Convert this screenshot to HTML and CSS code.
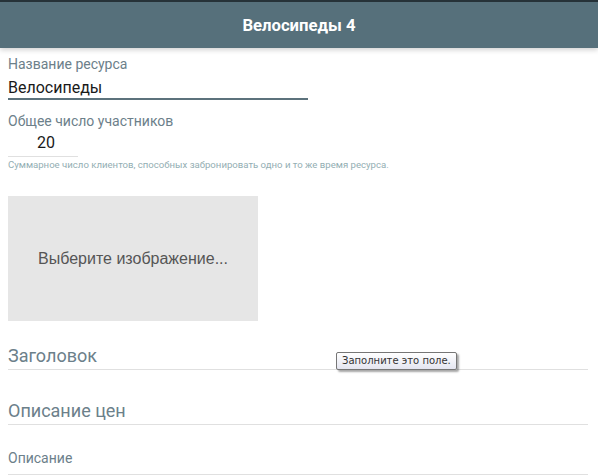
FILE: index.html
```html
<!DOCTYPE html>
<html lang="ru">
<head>
  <meta charset="UTF-8" />
  <meta name="viewport" content="width=device-width, initial-scale=1.0"/>
  <title>Велосипеды 4</title>
  <link rel="stylesheet" href="styles.css">
</head>
<body>
  <header class="toolbar">
    <h1>Велосипеды 4</h1>
  </header>

  <form class="form">
    <div class="field">
      <label for="name">Название ресурса</label>
      <input type="text" id="name" class="input active" value="Велосипеды">
    </div>

    <div class="field">
      <label for="capacity">Общее число участников</label>
      <input type="number" id="capacity" class="input short" value="20">
      <p class="hint">Суммарное число клиентов, способных забронировать одно и то же время ресурса.</p>
    </div>

    <div class="picker">Выберите изображение...</div>

    <div class="field wide title-field">
      <input type="text" class="input big" placeholder="Заголовок" required>
      <div class="tooltip">Заполните это поле.</div>
    </div>

    <div class="field wide">
      <input type="text" class="input big" placeholder="Описание цен">
    </div>

    <div class="field wide last">
      <input type="text" class="input small" placeholder="Описание">
    </div>
  </form>
</body>
</html>
```

FILE: styles.css
```css
* { box-sizing: border-box; }

body {
  margin: 0;
  font-family: Roboto, 'Noto Sans', sans-serif;
  background: #fff;
  color: #000;
  overflow: hidden;
}

.toolbar {
  height: 48px;
  background: #56707b;
  border-top: 2px solid #263238;
  display: flex;
  align-items: center;
  justify-content: center;
  box-shadow: 0 2px 5px rgba(0, 0, 0, 0.18);
}

.toolbar h1 {
  margin: 0;
  font-size: 16.7px;
  font-weight: 700;
  color: #fff;
}

.form {
  padding: 8px 10px 0 8px;
}

.field {
  position: relative;
  display: flex;
  flex-direction: column;
}

label {
  font-size: 14px;
  line-height: 16px;
  color: #6c808a;
}

.input {
  font-family: inherit;
  border: none;
  border-bottom: 1px solid #e0e0e0;
  outline: none;
  padding: 0;
  background: transparent;
  color: #1a1a1a;
}

.input.active {
  width: 300px;
  font-size: 16px;
  height: 28px;
  padding-top: 4px;
  border-bottom: 2px solid #5c727c;
}

.input.short {
  width: 70px;
  font-size: 16px;
  height: 28px;
  text-align: center;
  padding-left: 6px;
  -moz-appearance: textfield;
}

.input.short::-webkit-inner-spin-button,
.input.short::-webkit-outer-spin-button {
  -webkit-appearance: none;
  margin: 0;
}

.field + .field {
  margin-top: 13px;
}

.hint {
  margin: 2px 0 0;
  font-size: 9.6px;
  color: #93aeb3;
}

.picker {
  margin-top: 26px;
  width: 250px;
  height: 125px;
  background: #e6e6e6;
  display: flex;
  align-items: center;
  justify-content: center;
  font-family: 'Liberation Sans', Arial, sans-serif;
  font-size: 16px;
  color: #555;
}

.wide .input {
  width: 580px;
}

.title-field {
  margin-top: 21px;
}

.input.big {
  font-size: 18px;
  height: 28px;
}

.input.small {
  font-size: 14px;
  height: 34px;
}

.field.wide + .field.wide {
  margin-top: 27px;
}

.field.wide + .field.wide.last {
  margin-top: 16px;
}

.input::placeholder {
  color: #6c808a;
  opacity: 1;
}

.tooltip {
  position: absolute;
  left: 328px;
  top: 10px;
  padding: 2px 5px 3px;
  font-family: 'DejaVu Sans', sans-serif;
  font-size: 10px;
  color: #333;
  background: linear-gradient(#ffffff, #e4e5f0);
  border: 1px solid #767676;
  border-radius: 2px;
  box-shadow: 2px 2px 2px rgba(0, 0, 0, 0.35);
}
```
